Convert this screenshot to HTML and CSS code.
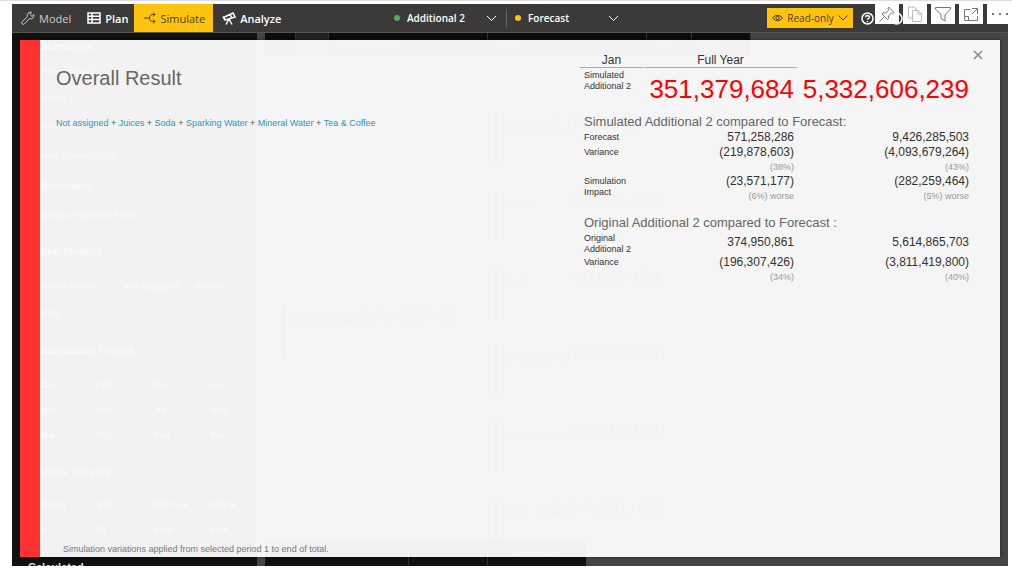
FILE: index.html
```html
<!DOCTYPE html>
<html lang="en">
<head>
<meta charset="utf-8">
<title>Simulate</title>
<link rel="stylesheet" href="styles.css">
</head>
<body>
<div class="app">
  <header class="topbar">
    <nav class="tabs">
      <button class="tab tab-muted"><svg width="14" height="14" viewBox="0 0 14 14"><path d="M12.900 3.600 11 5.400 8.700 3.100 10.600 1.200A3.600 3.600 0 0 0 6.300 5.700L1.200 10.700a1.500 1.500 0 0 0 2.200 2.200L8.400 7.800A3.600 3.600 0 0 0 12.900 3.600Z"/></svg>Model</button>
      <button class="tab tab-plan"><svg width="14" height="12" viewBox="0 0 14 12"><path d="M1 1h12v10H1zM5 1v10M1 4.300h12M1 7.600h12"/></svg>Plan</button>
      <button class="tab tab-active"><svg width="12" height="14" viewBox="0 0 12 14"><path d="M0 7h5M11 3.500H8.500C6 3.500 6 5 5.500 7 6 9 6 10.500 8.500 10.500H11M9 1.500l2 2-2 2M9 8.500l2 2-2 2"/></svg>Simulate</button>
      <button class="tab tab-analyze"><svg width="14" height="13" viewBox="0 0 14 13"><path d="M1.500 5.500 11 1l2 4-9.500 3zM7 7l-3 5.500M7 7l3 5.500M8 2.500l2 3.500M1 4.500l2 4"/></svg>Analyze</button>
    </nav>
    <div class="versions">
      <button class="version"><i class="dot green"></i><span>Additional 2</span><svg width="11" height="7" viewBox="0 0 11 7"><path d="M1 1l4.500 4.500L10 1"/></svg></button>
      <button class="version version-last"><i class="dot amber"></i><span>Forecast</span><svg width="11" height="7" viewBox="0 0 11 7"><path d="M1 1l4.500 4.500L10 1"/></svg></button>
    </div>
    <div class="session">
      <button class="readonly"><svg width="11" height="8" viewBox="0 0 11 8"><path d="M.5 4Q5.500-1.500 10.500 4 5.500 9.500.5 4Z"/><circle cx="5.500" cy="4" r="1.600"/></svg>Read-only<svg width="10" height="6" viewBox="0 0 10 6"><path d="M.5.5 5 5 9.500.5"/></svg></button>
      <button class="help" aria-label="Help"><svg width="13" height="13" viewBox="0 0 13 13"><circle cx="6.500" cy="6.500" r="5.500"/><path d="M4.700 5.200c0-2.400 3.700-2.200 3.700 0 0 1.200-1.900 1.300-1.900 2.600M6.500 9v1.200"/></svg></button>
      <button class="help account" aria-label="Account"><svg width="13" height="13" viewBox="0 0 13 13"><circle cx="6.500" cy="6.500" r="5.500"/></svg></button>
    </div>
  </header>

  <main class="workspace">
    <aside class="sidebar">
      <h2>Scenarios</h2>
      <p>My Scenarios (2)</p>
      <p>Scenario 1</p>
      <p>Scenario 2</p>
      <p class="shared">Shared Scenarios (5)</p>
      <h2>Writeback</h2>
      <p class="url">Post data to writeback URL</p>
      <h2 class="models">Sub Models</h2>
      <div class="chips"><span class="chip">Overall Result</span><span>Not assigned</span><span>Juices</span></div>
      <p class="soda">Soda</p>
      <h2 class="period">Simulation Period</h2>
      <div class="months"><span>Jan</span><span>Feb</span><span>Mar</span><span>Apr</span><span>May</span><span>Jun</span><span>Jul</span><span>Aug</span><span>Sep</span><span>Oct</span><span>Nov</span><span>Dec</span></div>
      <h2 class="display">Value Display</h2>
      <div class="months"><span>Month</span><span>YTD</span><span>Full Year</span><span>Sim M...</span><span>0</span><span>0k</span><span>0.0m</span><span>0.0b</span></div>
      <h2 class="calc">Calculated</h2>
    </aside>
    <section class="board">
      <div class="ribbon"><span class="cell-a"></span><span class="cell-b"></span><span class="cell-c">Sparkling Water</span><span class="cell-d">Soda</span><span class="cell-e">Edit</span><span class="cell-f">Reset</span></div>
      <div class="tree">
        <article class="node root"><span>Overall Result</span><b>5,332,606,239</b></article>
        <div class="branch">
          <article class="node"><span>Not assigned</span><b>1,065,999,558</b></article>
          <article class="node"><span>Juices</span><b>792,281,928</b></article>
          <article class="node"><span>Soda</span><b>59,053,180</b></article>
          <article class="node"><span>Sparking Water</span><b>794,048,339</b></article>
          <article class="node"><span>Mineral Water</span><b>418,512,148</b></article>
          <article class="node"><span>Tea &amp; Coffee</span><b>2,202,711,086</b></article>
        </div>
      </div>
      <div class="footer-strip"><span></span><span></span><span>Go to level</span></div>
    </section>

    <section class="dialog" role="dialog" aria-label="Overall Result">
      <div class="dialog-main">
        <h1>Overall Result</h1>
        <p class="crumbs"><a href="#">Not assigned</a> + <a href="#">Juices</a> + <a href="#">Soda</a> + <a href="#">Sparking Water</a> + <a href="#">Mineral Water</a> + <a href="#">Tea &amp; Coffee</a></p>
        <p class="note">Simulation variations applied from selected period 1 to end of total.</p>
      </div>
      <table class="results">
        <colgroup><col class="col-label"><col class="col-month"><col class="col-year"></colgroup>
        <thead><tr><th><div>Jan</div></th><th><div>Full Year</div></th><td></td></tr></thead>
        <tbody>
          <tr class="total"><th scope="row">Simulated Additional 2</th><td>351,379,684</td><td>5,332,606,239</td></tr>
          <tr class="group"><th colspan="3">Simulated Additional 2 compared to Forecast:</th></tr>
          <tr class="line"><th scope="row">Forecast</th><td>571,258,286</td><td>9,426,285,503</td></tr>
          <tr class="with-share"><th scope="row">Variance</th><td>(219,878,603)<small>(38%)</small></td><td>(4,093,679,264)<small>(43%)</small></td></tr>
          <tr class="with-share"><th scope="row">Simulation Impact</th><td>(23,571,177)<small>(6%) worse</small></td><td>(282,259,464)<small>(5%) worse</small></td></tr>
          <tr class="group group-second"><th colspan="3">Original Additional 2 compared to Forecast :</th></tr>
          <tr class="original"><th scope="row">Original Additional 2</th><td>374,950,861</td><td>5,614,865,703</td></tr>
          <tr class="with-share"><th scope="row">Variance</th><td>(196,307,426)<small>(34%)</small></td><td>(3,811,419,800)<small>(40%)</small></td></tr>
        </tbody>
      </table>
      <button class="close" aria-label="Close"><svg width="10" height="10" viewBox="0 0 10 10"><path d="M1 1l8 8M9 1 1 9"/></svg></button>
    </section>
  </main>
</div>

<div class="visual-tools">
  <button aria-label="Pin"><svg width="18" height="18" viewBox="0 0 18 18"><path d="M10.500 2 16 7.500l-1.500.7-1-.2-3 3 .3 2.500-1.300 1L4 9l1-1.300 2.600.3 3-3-.500-1.500zM6.500 11.500 1.500 16.500"/></svg></button>
  <button class="pale" aria-label="Copy"><svg width="18" height="18" viewBox="0 0 18 18"><path d="M6 13H2.500V2H8l3 3M6.500 5.500H12l3.500 3.500v7.500h-9zM12 5.500V9h3.500"/></svg></button>
  <button aria-label="Filter"><svg width="18" height="18" viewBox="0 0 18 18"><path d="M1.500 2.500h15v1.700L11 9.500v6.500l-4-2.500v-4L1.500 4.200z"/></svg></button>
  <button aria-label="Focus mode"><svg width="18" height="18" viewBox="0 0 18 18"><path d="M8 4.500H2.500v11h13V11M10 3.500h5.500V9M15 4l-5 5M2.500 11.500h4v4"/></svg></button>
  <button aria-label="More options"><svg width="18" height="18" viewBox="0 0 18 18"><path class="fill" d="M1 8h2v2H1zM8 8h2v2H8zM15 8h2v2h-2z"/></svg></button>
</div>
</body>
</html>
```

FILE: styles.css
```css
* { box-sizing: border-box; }
body {
  margin: 0;
  background: #fff;
  border-top: 1px solid #ddd;
  height: 100vh;
  overflow: hidden;
  font-family: "Liberation Sans", Arial, sans-serif;
  color: #333;
}
button { border: 0; padding: 0; background: none; color: inherit; font: inherit; cursor: pointer; }
svg { fill: none; stroke: currentColor; flex: none; display: block; }
h1, h2, p { margin: 0; font-weight: normal; }
.app { display: flex; flex-direction: column; height: 100%; padding: 3px 4px 3px 12px; }

.topbar {
  display: flex;
  flex: none;
  height: 29px;
  background: #3b3a39;
  border-bottom: 1px solid #555;
  color: #fff;
  font-family: "Open Sans", "Noto Sans", sans-serif;
  font-size: 11px;
}
.tabs { display: flex; flex: none; width: 280px; }
.tab { display: flex; align-items: center; gap: 4px; padding: 0 8px; font-weight: 600; }
.tab-muted { padding-left: 9px; color: #ccc; font-weight: 400; }
.tab-plan { padding-right: 6px; }
.tab-plan svg { stroke-width: 1.5; }
.tab-active { background: #ffc20e; color: #4d4420; font-weight: 400; padding: 0 8px 0 10px; }
.tab-analyze { padding-left: 9px; }
.tab-analyze svg { stroke-width: 1.5; }
.versions { display: flex; align-items: center; flex: 1; padding-left: 102px; }
.version {
  display: flex;
  align-items: center;
  width: 113px;
  height: 18px;
  padding-right: 9px;
  border-right: 1px solid #666;
  font-size: 10px;
  font-weight: 600;
}
.version span { flex: 1; text-align: left; padding-left: 7px; }
.version-last { width: 120px; border: 0; padding: 0 8px; }
.dot { width: 6px; height: 6px; border-radius: 50%; }
.green { background: #4caf50; }
.amber { background: #ffc107; }
.session { display: flex; align-items: center; width: 241px; gap: 8px; }
.readonly {
  display: flex;
  align-items: center;
  justify-content: center;
  gap: 4px;
  width: 86px;
  height: 20px;
  background: #ffc20e;
  color: #4a3d10;
  font-size: 10px;
  font-weight: 500;
}
.account { margin-left: 8px; }
.help svg { stroke-width: 1.5; }

.workspace { position: relative; flex: 1; min-height: 0; display: flex; background: #444546; overflow: hidden; }
.sidebar { width: 245px; flex: none; background: #111; color: #888; padding: 4px 14px 0; overflow: hidden; font-size: 9px; font-weight: bold; }
.sidebar h2 { font-size: 11px; font-weight: bold; line-height: 18px; padding: 0 14px; height: 25px; }
.sidebar p { line-height: 18px; height: 27px; padding-left: 4px; }
.sidebar .shared { height: 34px; padding-top: 4px; }
.sidebar .url { height: 40px; padding-top: 4px; }
.sidebar .models { height: 30px; }
.sidebar .period { height: 32px; }
.sidebar .display { height: 30px; }
.chips { display: flex; gap: 16px; height: 27px; align-items: center; }
.chip { border: 1px solid #443a20; color: #8a7020; padding: 6px 9px; }
.sidebar .soda { height: 42px; padding-left: 13px; line-height: 28px; }
.months { display: grid; grid-template-columns: repeat(4, 57px); grid-auto-rows: 25px; padding-left: 13px; line-height: 25px; margin-bottom: 15px; }
.sidebar .calc { padding-left: 2px; color: #ddd; }
.board { flex: 1; min-width: 0; margin-left: 8px; display: flex; flex-direction: column; }
.ribbon { display: flex; flex: none; width: 486px; height: 24px; background: #0b0b0b; color: #666; font-size: 9px; line-height: 22px; }
.ribbon span { border-right: 1px solid #333; padding-left: 8px; }
.cell-a { width: 31px; }
.cell-b { width: 33px; background: #222; }
.cell-c { width: 159px; }
.cell-d { width: 159px; }
.cell-e { width: 45px; }
.cell-f { flex: 1; }
.tree { flex: 1; min-height: 0; display: flex; padding-left: 16px; gap: 48px; overflow: hidden; }
.node { display: flex; flex: none; width: 165px; height: 52px; border-left: 4px solid #342020; justify-content: space-between; padding-left: 5px; font-size: 10px; color: #000; line-height: 30px; white-space: nowrap; }
.node b { font-size: 17px; line-height: 22px; font-weight: normal; margin-left: -8px; }
.root { margin-top: 249px; border-color: #111; }
.branch { display: flex; flex-direction: column; gap: 25px; padding-top: 56px; }
.footer-strip { display: flex; flex: none; width: 321px; height: 26px; background: #111; color: #666; font-size: 9px; line-height: 26px; }
.footer-strip span { width: 79px; border-right: 1px solid #333; padding-left: 24px; white-space: nowrap; }
.footer-strip span:first-child { width: 144px; }
.footer-strip span:last-child { flex: 1; border: 0; }

.dialog {
  position: absolute;
  inset: 7px 8px 9px;
  display: flex;
  justify-content: space-between;
  background: rgba(255, 255, 255, 0.95);
  border-left: 20px solid #ff3232;
  box-shadow: 0 0 3px rgba(0, 0, 0, 0.5);
}
.dialog-main { display: flex; flex-direction: column; padding: 26px 0 1px 16px; }
.dialog h1 { font-size: 20px; line-height: 24px; color: #666; }
.crumbs { margin-top: 26px; font-size: 9px; line-height: 14px; color: #555; }
.crumbs a { color: #2e94c8; text-decoration: none; }
.note { margin-top: auto; padding-left: 7px; font-size: 9px; line-height: 13px; color: #777; }
.results { width: 393px; margin: 13px 27px 0 0; align-self: flex-start; border-collapse: collapse; table-layout: fixed; font-size: 12px; line-height: 15px; }
.col-label { width: 64px; }
.col-month { width: 154px; }
.results th, .results td { padding: 0 4px; font-weight: normal; text-align: right; vertical-align: top; }
.results tbody th { font-size: 9px; line-height: 11px; text-align: left; padding-top: 2px; }
.results thead th { padding: 0 1px 0 0; text-align: center; }
.results thead div { height: 15px; border-bottom: 1px solid #aaa; }
.results .total { height: 45px; }
.results .total td { padding-left: 0; font-size: 26px; line-height: 42px; color: #f00; }
.results .group th { font-size: 13px; line-height: 17px; padding-top: 0; color: #666; }
.results .group { height: 17px; }
.results .line { height: 15px; }
.results .with-share { height: 29px; }
.results .group-second th { padding-top: 11px; }
.results .original td { padding-top: 4px; }
.results .original { height: 24px; }
.results small { display: block; font-size: 9px; line-height: 14px; color: #999; }
.close { position: absolute; top: 10px; right: 17px; color: #888; }
.close svg { stroke-width: 1.5; }

.visual-tools { position: absolute; top: 4px; right: 0; display: flex; gap: 4px; }
.visual-tools button { display: flex; align-items: center; justify-content: center; width: 24px; height: 20px; background: #fff; color: #777; }
.visual-tools .pale { color: #bbb; }
.visual-tools .fill { fill: #777; stroke: none; }
.visual-tools button:last-child { width: 25px; }
```
